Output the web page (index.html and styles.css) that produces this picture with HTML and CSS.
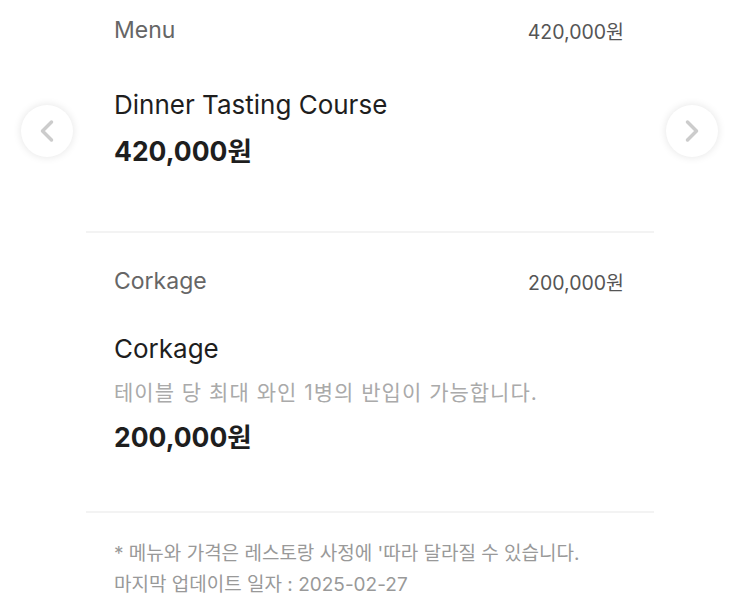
FILE: index.html
```html
<!DOCTYPE html>
<html lang="ko">
<head>
<meta charset="utf-8">
<title>Menu</title>
<link rel="stylesheet" href="styles.css">
</head>
<body>
<div class="page">
  <button class="nav nav--prev" aria-label="이전">
    <svg viewBox="0 0 24 24" width="24" height="24"><path d="M16.5 3 L7.5 12 L16.5 21" fill="none" stroke="#cccccc" stroke-width="3.5" stroke-linecap="round" stroke-linejoin="round"/></svg>
  </button>
  <button class="nav nav--next" aria-label="다음">
    <svg viewBox="0 0 24 24" width="24" height="24"><path d="M7.5 3 L16.5 12 L7.5 21" fill="none" stroke="#cccccc" stroke-width="3.5" stroke-linecap="round" stroke-linejoin="round"/></svg>
  </button>

  <div class="list">
    <section class="item item--first">
      <div class="item-head">
        <span class="item-cat">Menu</span>
        <span class="item-sum">420,000원</span>
      </div>
      <div class="item-body">
        <h3 class="item-title">Dinner Tasting Course</h3>
        <p class="item-price">420,000원</p>
      </div>
    </section>

    <section class="item">
      <div class="item-head">
        <span class="item-cat">Corkage</span>
        <span class="item-sum">200,000원</span>
      </div>
      <div class="item-body">
        <h3 class="item-title">Corkage</h3>
        <p class="item-desc">테이블 당 최대 와인 1병의 반입이 가능합니다.</p>
        <p class="item-price">200,000원</p>
      </div>
    </section>

    <footer class="notes">
      <p>* 메뉴와 가격은 레스토랑 사정에 '따라 달라질 수 있습니다.</p>
      <p>마지막 업데이트 일자 : 2025-02-27</p>
    </footer>
  </div>
</div>
</body>
</html>
```

FILE: styles.css
```css
* { box-sizing: border-box; }
html, body {
  margin: 0;
  padding: 0;
  background: #ffffff;
}
body {
  font-family: Inter, "Noto Sans CJK KR", sans-serif;
  color: #222;
}
.page {
  position: relative;
  width: 734px;
  height: 616px;
  overflow: hidden;
}
.nav {
  position: absolute;
  top: 105px;
  width: 52px;
  height: 52px;
  border-radius: 50%;
  border: none;
  background: #fff;
  box-shadow: 0 0 9px rgba(0,0,0,0.11);
  display: flex;
  align-items: center;
  justify-content: center;
  padding: 0;
}
.nav--prev { left: 21px; }
.nav--next { left: 666px; }

.list {
  width: 568px;
  margin-left: 86px;
}
.item {
  padding: 33px 30px 57px 28px;
  border-bottom: 2px solid #f3f3f3;
}
.item--first {
  padding-top: 15px;
  padding-bottom: 63px;
}
.item-head {
  display: flex;
  justify-content: space-between;
  align-items: center;
  height: 30px;
}
.item-cat {
  font-size: 23px;
  color: #666;
}
.item-sum {
  font-size: 19.5px;
  color: #555;
}
.item-body {
  margin-top: 36px;
  display: flex;
  flex-direction: column;
  gap: 12px;
}
.item--first .item-body { margin-top: 43px; }
.item-title {
  margin: 0;
  font-size: 26px;
  line-height: 34px;
  font-weight: 400;
  color: #1e1e1e;
}
.item-desc {
  margin: 0;
  font-size: 21px;
  line-height: 30px;
  letter-spacing: 1px;
  color: #aaa;
}
.item-price {
  margin: 0;
  font-size: 26.5px;
  line-height: 34px;
  font-weight: 700;
  color: #1e1e1e;
}
.notes {
  padding: 25px 28px 0;
  color: #999;
  font-size: 19px;
  line-height: 31px;
}
.notes p { margin: 0; }
```
